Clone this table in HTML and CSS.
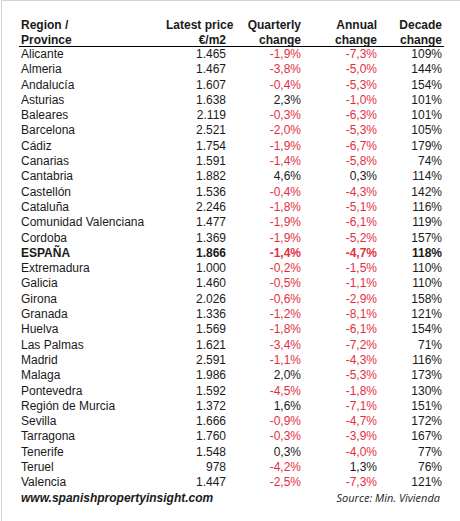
FILE: index.html
```html
<!DOCTYPE html>
<html>
<head>
<meta charset="utf-8">
<link rel="stylesheet" href="styles.css">
</head>
<body>
<div class="frame">
  <div class="table">
    <div class="row head">
      <div class="c name">Region /<br>Province</div>
      <div class="c num"><span class="lp">Latest price</span><br>€/m2</div>
      <div class="c num">Quarterly<br>change</div>
      <div class="c num">Annual<br>change</div>
      <div class="c num">Decade<br>change</div>
    </div>
    <div class="body" id="body"></div>
    <div class="foot">
      <div class="site">www.spanishpropertyinsight.com</div>
      <div class="source">Source: Min. Vivienda</div>
    </div>
  </div>
</div>
<script>
const data = [
["Alicante","1.465","-1,9%","-7,3%","109%"],
["Almeria","1.467","-3,8%","-5,0%","144%"],
["Andalucía","1.607","-0,4%","-5,3%","154%"],
["Asturias","1.638","2,3%","-1,0%","101%"],
["Baleares","2.119","-0,3%","-6,3%","101%"],
["Barcelona","2.521","-2,0%","-5,3%","105%"],
["Cádiz","1.754","-1,9%","-6,7%","179%"],
["Canarias","1.591","-1,4%","-5,8%","74%"],
["Cantabria","1.882","4,6%","0,3%","114%"],
["Castellón","1.536","-0,4%","-4,3%","142%"],
["Cataluña","2.246","-1,8%","-5,1%","116%"],
["Comunidad Valenciana","1.477","-1,9%","-6,1%","119%"],
["Cordoba","1.369","-1,9%","-5,2%","157%"],
["ESPAÑA","1.866","-1,4%","-4,7%","118%",true],
["Extremadura","1.000","-0,2%","-1,5%","110%"],
["Galicia","1.460","-0,5%","-1,1%","110%"],
["Girona","2.026","-0,6%","-2,9%","158%"],
["Granada","1.336","-1,2%","-8,1%","121%"],
["Huelva","1.569","-1,8%","-6,1%","154%"],
["Las Palmas","1.621","-3,4%","-7,2%","71%"],
["Madrid","2.591","-1,1%","-4,3%","116%"],
["Malaga","1.986","2,0%","-5,3%","173%"],
["Pontevedra","1.592","-4,5%","-1,8%","130%"],
["Región de Murcia","1.372","1,6%","-7,1%","151%"],
["Sevilla","1.666","-0,9%","-4,7%","172%"],
["Tarragona","1.760","-0,3%","-3,9%","167%"],
["Tenerife","1.548","0,3%","-4,0%","77%"],
["Teruel","978","-4,2%","1,3%","76%"],
["Valencia","1.447","-2,5%","-7,3%","121%"]
];
const body = document.getElementById('body');
for (const d of data) {
  const row = document.createElement('div');
  row.className = 'row' + (d[5] ? ' bold' : '');
  d.slice(0,5).forEach((v,i) => {
    const c = document.createElement('div');
    c.className = 'c ' + (i === 0 ? 'name' : 'num') + ((i===2||i===3) && v.startsWith('-') ? ' neg' : '');
    c.textContent = v;
    row.appendChild(c);
  });
  body.appendChild(row);
}
</script>
</body>
</html>
```
FILE: styles.css
```css
html, body {
  margin: 0;
  padding: 0;
  background: #fff;
}
body {
  width: 460px;
  height: 521px;
  overflow: hidden;
}
.frame {
  box-sizing: border-box;
  width: 460px;
  height: 521px;
  border-top: 1px solid #d4d4d4;
  border-left: 1px solid #d4d4d4;
  margin-left: 1px;
  padding-top: 16px;
  padding-left: 17px;
}
.table {
  width: 425px;
  font-family: "Liberation Sans", Arial, sans-serif;
  font-size: 12px;
  color: #1a1a1a;
}
.row {
  display: grid;
  grid-template-columns: 1fr 60px 75px 76px 65px;
  padding: 0 2px;
  height: 15.3px;
  line-height: 15.3px;
}
.row.head {
  box-sizing: border-box;
  height: 30px;
  padding-top: 1px;
  line-height: 15px;
  font-weight: bold;
  border-bottom: 1px solid #000;
}
.lp {
  padding-right: 5px;
}
.c {
  white-space: nowrap;
}
.num {
  text-align: right;
}
.neg {
  color: #e3303f;
}
.bold {
  font-weight: bold;
}
.foot {
  display: flex;
  justify-content: space-between;
  align-items: center;
  padding: 0 4px 0 2px;
  height: 14px;
}
.site {
  font-weight: bold;
  font-style: italic;
}
.source {
  font-family: "Open Sans", sans-serif;
  font-style: italic;
  font-size: 11px;
  color: #222;
}
```
